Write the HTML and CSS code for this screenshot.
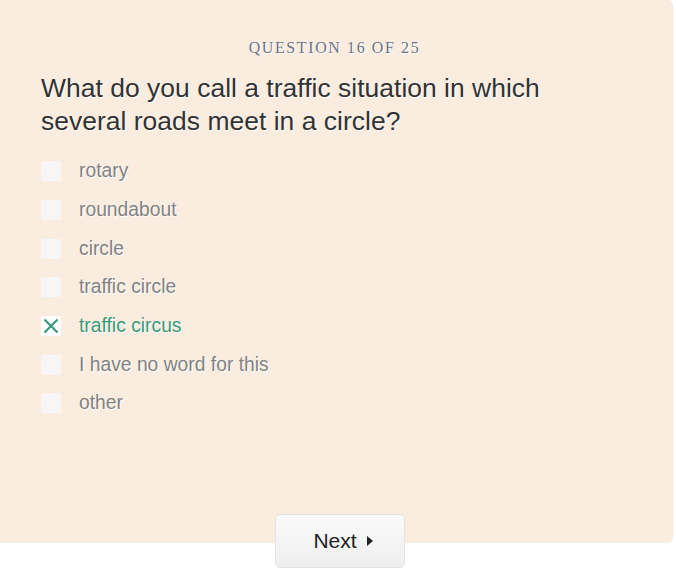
FILE: index.html
```html
<!DOCTYPE html>
<html>
<head>
<meta charset="utf-8">
<link rel="stylesheet" href="styles.css">
</head>
<body>
<div class="page">
  <div class="panel">
    <div class="qnum">QUESTION 16 OF 25</div>
    <h1 class="question">What do you call a traffic situation in which several roads meet in a circle?</h1>
    <ul class="options">
      <li class="option"><span class="box"></span><span class="label">rotary</span></li>
      <li class="option"><span class="box"></span><span class="label">roundabout</span></li>
      <li class="option"><span class="box"></span><span class="label">circle</span></li>
      <li class="option"><span class="box"></span><span class="label">traffic circle</span></li>
      <li class="option checked"><span class="box"><svg width="20" height="20" viewBox="0 0 20 20"><path d="M3.5 3.5 L16.5 16.5 M16.5 3.5 L3.5 16.5" stroke="#3a9a78" stroke-width="2.2" fill="none"/></svg></span><span class="label">traffic circus</span></li>
      <li class="option"><span class="box"></span><span class="label">I have no word for this</span></li>
      <li class="option"><span class="box"></span><span class="label">other</span></li>
    </ul>
  </div>
  <div class="actions">
    <button class="next">Next <span class="arrow"></span></button>
  </div>
</div>
</body>
</html>
```
FILE: styles.css
```css
html, body {
  margin: 0;
  padding: 0;
  background: #ffffff;
}
.page {
  width: 676px;
}
.panel {
  box-sizing: border-box;
  width: 673px;
  height: 543px;
  background: #faecde;
  border-radius: 0 5px 5px 0;
  padding: 38px 41px 0 41px;
  font-family: "Liberation Sans", Arial, sans-serif;
}
.qnum {
  text-align: center;
  font-family: "Liberation Serif", "Times New Roman", serif;
  font-size: 16px;
  letter-spacing: 1.6px;
  color: #6d7385;
  text-shadow: 1px 1px 0 #ffffff;
  line-height: 20px;
  padding-right: 4px;
}
.question {
  margin: 14px 0 0 0;
  font-weight: normal;
  font-size: 26.5px;
  line-height: 33px;
  color: #333333;
  width: 560px;
  text-shadow: 1px 1px 0 #ffffff;
}
.options {
  list-style: none;
  margin: 14px 0 0 0;
  padding: 0;
}
.option {
  display: flex;
  align-items: center;
  height: 38.7px;
}
.box {
  width: 20px;
  height: 20px;
  background: #f7f6f4;
  flex: none;
  margin-right: 18px;
  display: flex;
}
.checked .box {
  background: #ffffff;
}
.label {
  font-size: 19.3px;
  color: #828282;
  text-shadow: 1px 1px 0 #ffffff;
}
.checked .label {
  color: #3a9a78;
}
.actions {
  display: flex;
  justify-content: center;
  padding-left: 4px;
  margin-top: -29px;
}
.next {
  width: 130px;
  height: 54px;
  border: 1px solid #e4e4e4;
  border-radius: 5px;
  background: linear-gradient(#fafafa, #efefef);
  font-family: "Liberation Sans", Arial, sans-serif;
  font-size: 21px;
  color: #222222;
  display: flex;
  align-items: center;
  justify-content: center;
  gap: 10px;
  padding: 0 0 0 6px;
}
.arrow {
  width: 0;
  height: 0;
  border-top: 5px solid transparent;
  border-bottom: 5px solid transparent;
  border-left: 6px solid #222222;
}
```
